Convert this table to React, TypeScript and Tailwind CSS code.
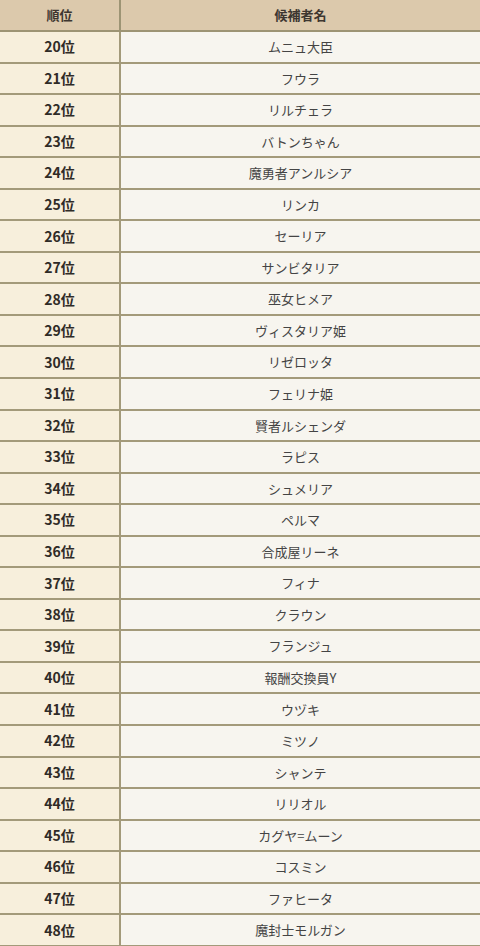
const names = [
  "ムニュ大臣",
  "フウラ",
  "リルチェラ",
  "バトンちゃん",
  "魔勇者アンルシア",
  "リンカ",
  "セーリア",
  "サンビタリア",
  "巫女ヒメア",
  "ヴィスタリア姫",
  "リゼロッタ",
  "フェリナ姫",
  "賢者ルシェンダ",
  "ラピス",
  "シュメリア",
  "ペルマ",
  "合成屋リーネ",
  "フィナ",
  "クラウン",
  "フランジュ",
  "報酬交換員Y",
  "ウヅキ",
  "ミツノ",
  "シャンテ",
  "リリオル",
  "カグヤ=ムーン",
  "コスミン",
  "ファヒータ",
  "魔封士モルガン",
]

export default function App() {
  return (
    <div
      className="w-[480px] h-[946px] overflow-hidden bg-[#f7f5ef] text-[#333]"
      style={{ fontFamily: '"Noto Sans CJK JP", "Noto Sans", sans-serif' }}
    >
      <table className="w-full table-fixed border-collapse">
        <colgroup>
          <col className="w-[120px]" />
          <col />
        </colgroup>
        <thead>
          <tr className="h-[31px] bg-[#dcc9ac] border-b-2 border-[#9d9474]">
            <th className="border-r-2 border-[#9d9474] text-[13px] font-bold text-[#3d3630] p-0">順位</th>
            <th className="text-[13px] font-bold text-[#3d3630] p-0">候補者名</th>
          </tr>
        </thead>
        <tbody>
          {names.map((name, i) => (
            <tr key={name} className="h-[31.55px] border-b-2 border-[#a39a7a]">
              <td className="bg-[#f7efdc] border-r-2 border-[#a39a7a] text-center text-[14px] font-bold text-[#2f2b27] p-0">
                {i + 20}位
              </td>
              <td className="bg-[#f7f5ef] text-center text-[13px] text-[#444] p-0">{name}</td>
            </tr>
          ))}
        </tbody>
      </table>
    </div>
  )
}
